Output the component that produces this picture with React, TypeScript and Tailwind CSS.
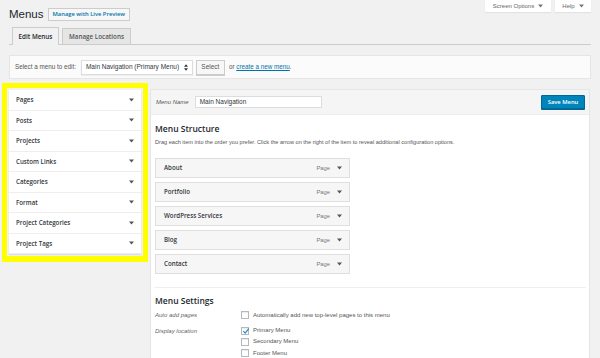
import React from "react";

const leftItems = [
  "Pages",
  "Posts",
  "Projects",
  "Custom Links",
  "Categories",
  "Format",
  "Project Categories",
  "Project Tags",
];

const menuItems = ["About", "Portfolio", "WordPress Services", "Blog", "Contact"];

const semi = { fontFamily: '"Open Sans", "Liberation Sans", sans-serif' };

function Arrow({ className = "" }: { className?: string }) {
  return (
    <svg width="5" height="4" viewBox="0 0 5 4" className={className}>
      <path d="M0 0.5h5L2.5 3.5z" fill="currentColor" />
    </svg>
  );
}

function Checkbox({ checked = false }: { checked?: boolean }) {
  return (
    <span className="relative flex h-[8px] w-[8px] shrink-0 items-center justify-center border border-[#b4b9be] bg-white shadow-[inset_0_1px_1px_rgba(0,0,0,0.08)]">
      {checked && (
        <svg width="8" height="8" viewBox="0 0 8 8" className="absolute -top-[1px] left-[0px]">
          <path d="M1.3 4.2l1.9 1.9L6.8 1.6" stroke="#1e8cbe" strokeWidth="1.2" fill="none" />
        </svg>
      )}
    </span>
  );
}

export default function App() {
  return (
    <div
      className="h-[358px] w-[600px] overflow-hidden bg-[#f1f1f1] text-[#23282d]"
      style={{ fontFamily: '"Liberation Sans", Arial, sans-serif' }}
    >
      {/* title row */}
      <div className="flex items-start justify-between px-[9px]">
        <div className="flex items-center gap-[4px] pt-[8px]">
          <h1 className="text-[11.5px] leading-[13px] text-[#23282d]">Menus</h1>
          <span
            className="flex h-[13px] items-center border border-[#ccc] bg-[#f7f7f7] px-[4px] text-[5.8px] font-semibold text-[#0073aa]"
            style={semi}
          >
            Manage with Live Preview
          </span>
        </div>
        <div className="flex gap-[4px]">
          <span className="flex h-[12px] w-[66px] items-center justify-center gap-[4px] bg-white text-[6px] text-[#666] shadow-[0_1px_1px_rgba(0,0,0,0.06)]">
            Screen Options <Arrow className="text-[#777]" />
          </span>
          <span className="flex h-[12px] w-[36px] items-center justify-center gap-[4px] bg-white text-[6px] text-[#666] shadow-[0_1px_1px_rgba(0,0,0,0.06)]">
            Help <Arrow className="text-[#777]" />
          </span>
        </div>
      </div>

      {/* tabs */}
      <div className="mx-[9px] mt-[6px] flex items-end gap-[3px] border-b border-[#ccc] pl-[3px]" style={semi}>
        <span className="-mb-[1px] flex h-[18px] w-[47px] items-center justify-center border border-b-0 border-[#ccc] bg-[#f1f1f1] text-[6.3px] font-semibold text-[#23282d]">
          Edit Menus
        </span>
        <span className="flex h-[16px] w-[69px] items-center justify-center border border-b-0 border-[#ccc] bg-[#e5e5e5] text-[6.3px] font-semibold text-[#555]">
          Manage Locations
        </span>
      </div>

      {/* select bar */}
      <div className="mx-[9px] mt-[10px] flex h-[24px] items-center gap-[3px] border border-[#e5e5e5] bg-[#fbfbfb] pl-[5px] text-[6.3px] text-[#555]">
        <span className="mr-[2px]">Select a menu to edit:</span>
        <span className="flex h-[15px] w-[112px] items-center justify-between border border-[#ddd] bg-white px-[4px] text-[6.5px] text-[#32373c] shadow-[0_1px_1px_rgba(0,0,0,0.05)]">
          Main Navigation (Primary Menu)
          <svg width="4" height="7" viewBox="0 0 4 7">
            <path d="M0 2.7h4L2 0.3zM0 4.3h4L2 6.7z" fill="#333" />
          </svg>
        </span>
        <span className="flex h-[15px] w-[29px] items-center justify-center border border-[#ccc] bg-[#f7f7f7] text-[6.5px] text-[#555] shadow-[0_1px_0_#ccc]">
          Select
        </span>
        <span className="ml-[1px]">
          or <span className="text-[#0073aa] underline">create a new menu</span>.
        </span>
      </div>

      {/* columns */}
      <div className="mt-[4px] flex items-start pl-[2px]">
        <div className="w-[146px] shrink-0 border-[5px] border-b-[6px] border-[#ffff00] p-[2px]">
          <div className="bg-white shadow-[0_1px_1px_rgba(0,0,0,0.08)]" style={semi}>
            {leftItems.map((item) => (
              <div
                key={item}
                className="flex h-[20.5px] items-center justify-between border-b border-[#eee] pl-[7px] pr-[7px] text-[6.2px] font-semibold text-[#32373c]"
              >
                {item}
                <Arrow className="text-[#555]" />
              </div>
            ))}
          </div>
        </div>

        <div className="ml-[2px] mt-[6px] h-[300px] w-[440px] border border-[#e5e5e5] bg-white">
          <div className="flex h-[25px] items-center justify-between border-b border-[#eee] bg-[#f5f5f5] pl-[5px] pr-[4px]">
            <div className="flex items-center gap-[6px]">
              <span className="text-[6px] italic text-[#555]">Menu Name</span>
              <span className="flex h-[12px] w-[127px] items-center border border-[#ddd] bg-white px-[4px] text-[6.5px] text-[#32373c]">
                Main Navigation
              </span>
            </div>
            <span
              className="flex h-[14px] w-[44px] items-center justify-center rounded-[1px] border border-[#006799] bg-[#0085ba] text-[5.8px] font-semibold text-white shadow-[0_1px_0_#006799]"
              style={semi}
            >
              Save Menu
            </span>
          </div>

          <div className="px-[4px]">
            <h3 className="mt-[8px] text-[8.5px] font-semibold leading-[11px] text-[#23282d]" style={semi}>
              Menu Structure
            </h3>
            <p className="mt-[4px] text-[5.6px] leading-[8px] text-[#555]">
              Drag each item into the order you prefer. Click the arrow on the right of the item to reveal additional configuration options.
            </p>
            <div className="mt-[12px] flex w-[195px] flex-col gap-[4px]" style={semi}>
              {menuItems.map((item) => (
                <div
                  key={item}
                  className="flex h-[20px] items-center justify-between border border-[#dfdfdf] bg-[#f6f6f6] pl-[8px] pr-[7px] text-[6.2px] font-semibold text-[#32373c]"
                >
                  {item}
                  <span
                    className="flex items-center gap-[7px] text-[5.8px] font-normal text-[#777]"
                    style={{ fontFamily: '"Liberation Sans", Arial, sans-serif' }}
                  >
                    Page <Arrow className="text-[#555]" />
                  </span>
                </div>
              ))}
            </div>
            <div className="mt-[13px] w-[431px] border-t border-[#eee]" />
            <h3 className="mt-[7px] text-[8.5px] font-semibold leading-[11px] text-[#23282d]" style={semi}>
              Menu Settings
            </h3>
            <div className="mt-[4px] flex text-[6px] text-[#555]">
              <span className="w-[86px] pt-[1px] italic text-[#666]">Auto add pages</span>
              <div className="flex items-center gap-[4px]">
                <Checkbox />
                <span>Automatically add new top-level pages to this menu</span>
              </div>
            </div>
            <div className="mt-[6px] flex text-[6px] text-[#555]">
              <span className="w-[86px] pt-[1px] italic text-[#666]">Display location</span>
              <div className="flex flex-col gap-[2.3px]">
                <div className="flex items-center gap-[4px]">
                  <Checkbox checked />
                  <span>Primary Menu</span>
                </div>
                <div className="flex items-center gap-[4px]">
                  <Checkbox />
                  <span>Secondary Menu</span>
                </div>
                <div className="flex items-center gap-[4px]">
                  <Checkbox />
                  <span>Footer Menu</span>
                </div>
              </div>
            </div>
          </div>
        </div>
      </div>
    </div>
  );
}
